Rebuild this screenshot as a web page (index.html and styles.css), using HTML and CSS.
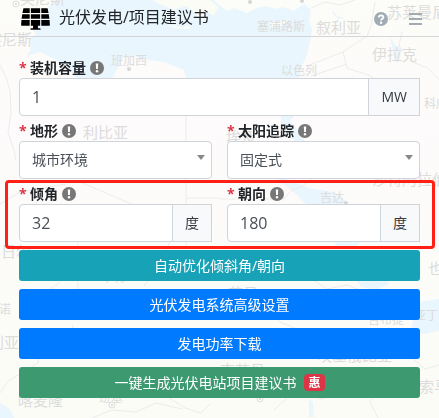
FILE: index.html
```html
<!DOCTYPE html>
<html lang="zh-CN">
<head>
<meta charset="utf-8">
<meta name="viewport" content="width=device-width, initial-scale=1">
<title>光伏发电/项目建议书</title>
<link rel="stylesheet" href="styles.css">
</head>
<body>
<svg class="map" viewBox="0 0 439 418" preserveAspectRatio="xMidYMin slice" aria-hidden="true">
  <defs>
    <linearGradient id="land" x1="0" y1="0" x2="0" y2="1">
      <stop offset="0" stop-color="#fcfcf8"/><stop offset=".3" stop-color="#fdfbfb"/><stop offset="1" stop-color="#fbfcf6"/>
    </linearGradient>
    <symbol id="info" viewBox="0 0 14 14"><circle cx="7" cy="7" r="7" fill="#777"/><path d="M5.800 2.600h2.400L7.900 8H6.100z" fill="#fff"/><circle cx="7" cy="10.200" r="1.200" fill="#fff"/></symbol>
  </defs>
  <rect width="439" height="418" fill="url(#land)"/>
  <g class="water">
    <path d="M56 0L48 8 40 20 32 28 36 34 29 40 31 48 27 56 40 52 56 60 68 67 76 78H112L118 68 124 57 134 56 148 60 164 62 184 70 186 78H299L302 66 307 54 310 42 312 30 309 20 311 10 304 4 294 11 283 7 276 9 266 6 257 8 247 13 234 8 228 11 219 5 214 0H120Z"/>
    <path d="M281 115h14l-5 6 8 10 7 10h-10l-10-10-4-8zM277 176l12 4 20 8 24 4 12 8 2 5h-40l-10-10-12-10-7-5zM334 241h28l-8 8h-16zM356 280l34-2-3 7-12 5-14-3zM418 302l21-3v32l-16 3-12-5zM309 400l4 2 1 15h-5zM0 403l10 6 4 9H0zM333 10l4 6 7 2-5 1-6-5zM390 37l6 9 6 3-4 14-3-1-3-16z"/>
  </g>
  <path class="coast" d="M152 0h58l8 7-4 9-7-4-5 9-8-9-8-6-12 4-14-6zM168 25l14 2 9-2-2 4-16-1zM268 24l12-3 10-2-9 7-8 2z"/>
  <g class="border">
    <path d="M0 65l6 12 4 14 1 22-3 20 6 17 2 10M186 78v172M186 198h34M0 204l20-12 46-8M80 182l52 22M311 76l36-12M307 66l36-14 24-16 4-10 4-24M343 52l4 16 24 8 10 10M311 8l14-6 15 3 15-5M402 32l-3 14 13 16 16 6 11 12M220 199h64l8-9 10-4 10-7M78 240v55l-10 8M60 282l-18 13M170 242l-16 32-10 12M72 325l8 20 11 10 24-3 10-8 12 4M0 393l8-12 30-18 3-17M92 418l20-8 24 2 20-9 26 6M165 395l20 13 16 5 10-10M315 281l12 8 20-4 20 8M270 312l10 10 15 6M274 410l14-13 20-2 14 4 22-8M390 374l-8 8-12 20 8 16M405 352l20 17 14-4"/>
  </g>
  <g class="place small">
    <text x="257" y="31">塞浦路斯</text><text x="281" y="75">以色列</text><text x="111" y="65">班加西</text>
    <text x="320" y="202">吉达</text><text x="-1" y="314">诺</text><text x="102" y="282">乍得</text>
    <text x="368" y="324">吉布提</text><text x="414" y="320">亚丁</text><text x="99" y="402">班基</text><text x="424" y="108">科威特</text>
  </g>
  <g class="place">
    <text x="20" y="4">突尼斯</text><text x="-13" y="45">突尼斯</text><text x="316" y="33">叙利亚</text><text x="387" y="18">苏莱曼尼亚</text>
    <text x="372" y="60">伊拉克</text><text x="83" y="138">利比亚</text><text x="226" y="143">埃及</text><text x="1" y="257">日尔</text>
    <text x="372" y="185">沙特阿拉伯</text><text x="-11" y="348">利亚</text><text x="18" y="406">喀麦隆</text><text x="228" y="299">苏丹</text>
    <text x="428" y="274">也门</text><text x="419" y="392">索马里</text><text x="220" y="376">南苏丹</text><text x="317" y="361">埃塞俄比亚</text>
  </g>
  <g class="pin"><circle cx="16" cy="4" r="3"/><circle cx="112" cy="405" r="3"/><circle cx="260" cy="399" r="3"/></g>
  <g class="dot"><circle cx="250" cy="2" r="2"/><circle cx="302" cy="1" r="2"/><circle cx="129" cy="69" r="2"/><circle cx="346" cy="203" r="2"/><circle cx="16" cy="4" r="1"/><circle cx="112" cy="405" r="1"/><circle cx="260" cy="399" r="1"/></g>
</svg>

<header class="bar">
  <svg class="logo" viewBox="0 0 30 22" aria-hidden="true">
    <path d="M2.500 0H9V4.800H1.500zM10.200 0h9.600v4.800h-9.600zM21 0h6.500l1 4.800h-7.500zM1.300 6h7.700v4.800H.6zM10.200 6h9.600v4.800h-9.600zM21 6h7.700l.7 4.800h-8.400zM.5 12h8.500v6H1Q0 18 .1 17zM10.200 12h9.600v6h-9.600zM21 12h8.500l.4 5q.1 1-.9 1h-8zM12.500 18h5v2.500h2q.8 0 .8 1.500h-10.600q0-1.500.8-1.500h2z"/>
  </svg>
  <h1>光伏发电/项目建议书</h1>
  <button class="tool" type="button" aria-label="帮助">
    <svg width="14" height="14" viewBox="0 0 14 14"><circle cx="7" cy="7" r="7" fill="#a1abb4"/><path d="M4.700 5.300Q4.900 3.300 7.100 3.300 9.400 3.400 9.400 5.300 9.300 6.300 8.100 6.900 7.100 7.400 7.100 8.400" fill="none" stroke="#fff" stroke-width="1.800"/><circle cx="7.100" cy="10.700" r="1.200" fill="#fff"/></svg>
  </button>
  <button class="tool" type="button" aria-label="菜单">
    <svg width="13" height="12" viewBox="0 0 13 12"><path d="M0 1h13M0 6h13M0 11h13" stroke="#a1abb4" stroke-width="2"/></svg>
  </button>
</header>

<form class="form">
  <div class="field">
    <label for="capacity"><span class="req">*</span>装机容量<svg class="info"><use href="#info"/></svg></label>
    <div class="group"><input id="capacity" type="text" value="1"><span class="unit">MW</span></div>
  </div>
  <div class="row">
    <div class="field">
      <label for="terrain"><span class="req">*</span>地形<svg class="info"><use href="#info"/></svg></label>
      <div class="pick"><select id="terrain"><option>城市环境</option></select></div>
    </div>
    <div class="field">
      <label for="tracking"><span class="req">*</span>太阳追踪<svg class="info"><use href="#info"/></svg></label>
      <div class="pick"><select id="tracking"><option>固定式</option></select></div>
    </div>
  </div>
  <div class="row marked">
    <div class="field">
      <label for="tilt"><span class="req">*</span>倾角<svg class="info"><use href="#info"/></svg></label>
      <div class="group"><input id="tilt" type="text" value="32"><span class="unit">度</span></div>
    </div>
    <div class="field">
      <label for="azimuth"><span class="req">*</span>朝向<svg class="info"><use href="#info"/></svg></label>
      <div class="group"><input id="azimuth" type="text" value="180"><span class="unit">度</span></div>
    </div>
  </div>
  <div class="actions">
    <button class="btn teal" type="button">自动优化倾斜角/朝向</button>
    <button class="btn blue" type="button">光伏发电系统高级设置</button>
    <button class="btn blue" type="button">发电功率下载</button>
    <button class="btn green" type="button">一键生成光伏电站项目建议书<span class="badge">惠</span></button>
  </div>
</form>
</body>
</html>
```
FILE: styles.css
```css
* { box-sizing: border-box; }
body {
  margin: 0;
  background: #fcfcf9;
  color: #212529;
  font: 14px/20px "Open Sans", "Noto Sans CJK SC", sans-serif;
}
button, input, select { font: inherit; color: inherit; }

.map { position: fixed; inset: 0; width: 100%; height: 100%; z-index: -1; }
.water { fill: #e9f6fd; }
.coast { fill: #fcfcf6; }
.border { fill: none; stroke: #ececec; stroke-width: 1; }
.place { fill: #dcdcdc; font-size: 15px; }
.small { font-size: 12px; }
.pin { fill: none; stroke: #ddd; }
.dot { fill: #d6d6d6; }

.bar {
  display: flex;
  align-items: center;
  height: 37px;
  padding: 2px 17px 0 21px;
  border-bottom: 1px solid #d2d6d8;
}
.logo { width: 29px; height: 22px; margin-right: 9px; }
h1 { flex: 1; margin: 0; font-size: 16px; font-weight: 400; line-height: 32px; padding-bottom: 4px; }
.tool { display: flex; padding: 0; border: 0; background: none; margin-left: 21px; }

.form { padding: 16px 19px; }
.row { display: grid; grid-template-columns: 1fr 1fr; gap: 15px; }
.marked { position: relative; }
.marked::after {
  content: "";
  position: absolute;
  inset: 1px -15px -7px -14px;
  border: 3px solid #ff1f14;
  border-radius: 4px;
  pointer-events: none;
}
label { display: flex; align-items: center; padding-top: 5px; font-weight: 700; }
.req { width: 11px; color: #dc3545; }
.info { width: 14px; height: 14px; margin-left: 4px; }

.group { display: flex; }
input, select {
  width: 100%;
  min-width: 0;
  height: 38px;
  padding: 0 12px;
  border: 1px solid #ced4da;
  border-radius: 4px;
  background: #fff;
  color: #495057;
}
input { flex: 1; border-radius: 4px 0 0 4px; font-size: 16px; }
.unit {
  display: flex;
  align-items: center;
  padding: 0 12px;
  border: 1px solid #ced4da;
  margin-left: -1px;
  background: #f8f9fb;
  color: #343a40;
}
.pick { position: relative; }
.pick::after {
  content: "";
  position: absolute;
  right: 7px;
  top: 14px;
  border: 4px solid transparent;
  border-top: 5px solid #888;
  border-bottom: 0;
  pointer-events: none;
}
select { display: block; appearance: none; }

.actions { display: grid; gap: 8px; padding-top: 8px; }
.btn {
  display: flex;
  align-items: center;
  justify-content: center;
  height: 31px;
  padding: 0 8px;
  border: 0;
  border-radius: 3px;
  color: #fff;
}
.teal { background: #17a2b8; }
.blue { background: #007bff; }
.green { background: #3d9970; }
.badge {
  margin-left: 8px;
  padding: 0 4px;
  border-radius: 4px;
  background: #dc3545;
  font-size: 12px;
  font-weight: 700;
  line-height: 17px;
}
```
